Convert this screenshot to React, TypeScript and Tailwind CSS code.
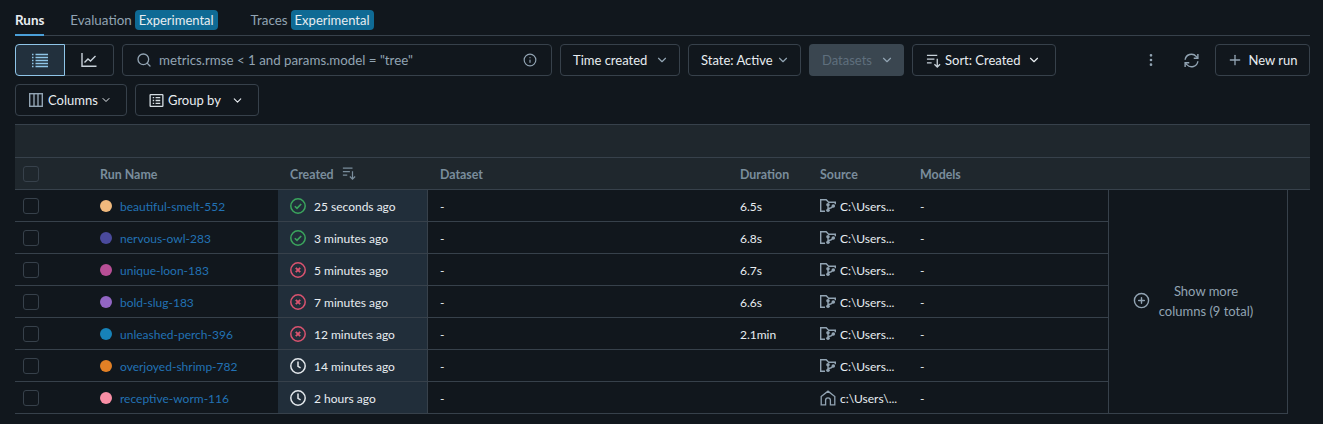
import { ChevronDown, Search, Info, MoreVertical, Plus, CirclePlus } from "lucide-react"

const font = { fontFamily: 'Lato, "Open Sans", sans-serif' }

const runs = [
  { name: "beautiful-smelt-552", color: "bg-[#f0b97d]", created: "25 seconds ago", status: "ok", duration: "6.5s", source: "C:\\Users..." },
  { name: "nervous-owl-283", color: "bg-[#4a4a9c]", created: "3 minutes ago", status: "ok", duration: "6.8s", source: "C:\\Users..." },
  { name: "unique-loon-183", color: "bg-[#b84f96]", created: "5 minutes ago", status: "fail", duration: "6.7s", source: "C:\\Users..." },
  { name: "bold-slug-183", color: "bg-[#9266c4]", created: "7 minutes ago", status: "fail", duration: "6.6s", source: "C:\\Users..." },
  { name: "unleashed-perch-396", color: "bg-[#1782b8]", created: "12 minutes ago", status: "fail", duration: "2.1min", source: "C:\\Users..." },
  { name: "overjoyed-shrimp-782", color: "bg-[#e28025]", created: "14 minutes ago", status: "clock", duration: "", source: "C:\\Users..." },
  { name: "receptive-worm-116", color: "bg-[#f98ea5]", created: "2 hours ago", status: "clock", duration: "", source: "c:\\Users\\...", home: true },
]

function SortIcon({ className }: { className?: string }) {
  return (
    <svg viewBox="0 0 16 16" fill="none" stroke="currentColor" strokeWidth="1.4" className={className}>
      <path d="M1 2.500h11M1 6.500h8M1 10.500h5" />
      <path d="M12 6v9M9 12l3 3 3-3" />
    </svg>
  )
}

function ListIcon({ className }: { className?: string }) {
  return (
    <svg viewBox="0 0 16 16" fill="none" stroke="currentColor" strokeWidth="1.3" className={className}>
      <path d="M3.500 2.500H16M3.500 5.500H16M3.500 8.500H16M3.500 11.500H16M3.500 14.500H16" />
      <path d="M0 2.500h1.500M0 5.500h1.500M0 8.500h1.500M0 11.500h1.500M0 14.500h1.500" />
    </svg>
  )
}

function ChartIcon({ className }: { className?: string }) {
  return (
    <svg viewBox="0 0 16 16" fill="none" stroke="currentColor" strokeWidth="1.4" className={className}>
      <path d="M1 1v13.300h14.500" />
      <path d="M3.500 10.500l3.500-3.500 2.500 2 5-5" />
    </svg>
  )
}

function ColumnsIcon({ className }: { className?: string }) {
  return (
    <svg viewBox="0 0 14 14" fill="none" stroke="currentColor" strokeWidth="1.4" className={className}>
      <rect x="0.700" y="0.700" width="12.600" height="12.600" />
      <path d="M5 1v12M9 1v12" />
    </svg>
  )
}

function GroupIcon({ className }: { className?: string }) {
  return (
    <svg viewBox="0 0 16 16" fill="none" stroke="currentColor" strokeWidth="1.4" className={className}>
      <rect x="1.200" y="1.700" width="13.600" height="12.600" rx="0.600" />
      <path d="M4 5h1.500M7 5h5M4 8h1.500M7 8h5M4 11h1.500M7 11h5" />
    </svg>
  )
}

function RefreshIcon({ className }: { className?: string }) {
  return (
    <svg viewBox="0 0 16 16" fill="none" stroke="currentColor" strokeWidth="1.5" className={className}>
      <path d="M1.200 7.200A6.800 6.800 0 0 1 13 3.600l1.400 1.600" />
      <path d="M14.800 1v4.600h-4.400" />
      <path d="M14.800 8.800A6.800 6.800 0 0 1 3 12.400l-1.400-1.600" />
      <path d="M1.200 15v-4.600h4.400" />
    </svg>
  )
}

function FolderBranchIcon({ className }: { className?: string }) {
  return (
    <svg viewBox="0 0 16 13" fill="none" className={className}>
      <path d="M5 12.300H.7V.7h5.500l2.400 2.500h6.700v2" stroke="currentColor" strokeWidth="1.400" />
      <path d="M8 5.500v6.500M8 9.500c2.200 0 4-.6 5-2.500" stroke="currentColor" strokeWidth="1.300" />
      <circle cx="8" cy="5.800" r="1.800" fill="currentColor" />
      <circle cx="8" cy="11.200" r="1.800" fill="currentColor" />
      <circle cx="13.300" cy="7" r="1.800" fill="currentColor" />
    </svg>
  )
}

function HomeIcon({ className }: { className?: string }) {
  return (
    <svg viewBox="0 0 16 16" fill="none" stroke="currentColor" strokeWidth="1.300" className={className}>
      <path d="M1.200 6.600L8 1.200l6.800 5.400v8.200h-4.400v-4.600a2.400 2.400 0 0 0-4.800 0v4.600H1.200z" />
    </svg>
  )
}

function StatusIcon({ status }: { status: string }) {
  if (status === "ok") {
    return (
      <svg viewBox="0 0 16 16" fill="none" stroke="#3ba55d" strokeWidth="1.500" className="h-4 w-4 shrink-0">
        <circle cx="8" cy="8" r="7.200" />
        <path d="M4.800 8.200l2.200 2.200 4.200-4.400" strokeWidth="1.600" />
      </svg>
    )
  }
  if (status === "fail") {
    return (
      <svg viewBox="0 0 16 16" fill="none" stroke="#d9536f" strokeWidth="1.500" className="h-4 w-4 shrink-0">
        <circle cx="8" cy="8" r="7.200" />
        <path d="M5.800 5.800l4.400 4.400M10.200 5.800l-4.400 4.400" strokeWidth="1.900" />
      </svg>
    )
  }
  return (
    <svg viewBox="0 0 16 16" fill="none" stroke="#e3e8ec" strokeWidth="1.500" className="h-4 w-4 shrink-0">
      <circle cx="8" cy="8" r="7.200" />
      <path d="M8 3.600V8.400l2.600 1.400" />
    </svg>
  )
}

function Button({ children, className }: { children: React.ReactNode; className?: string }) {
  return (
    <div className={`flex h-8 shrink-0 items-center whitespace-nowrap rounded border border-[#37414b] text-[#e8edf1] ${className ?? ""}`}>
      {children}
    </div>
  )
}

function Badge() {
  return <span className="rounded bg-[#0f6a94] px-1 py-px text-[13px] leading-[18px] text-[#e8edf1]">Experimental</span>
}

export default function App() {
  return (
    <div className="h-[424px] w-[1323px] overflow-hidden bg-[#11171d] pl-[15px] pr-[13px] text-[13px]" style={font}>
      <div className="flex h-9 items-center gap-[26px] border-b border-[#37414b] pt-[5px] text-[13.4px]">
        <div className="relative flex items-center self-stretch font-bold text-[#e8edf1]">
          Runs
          <span className="absolute inset-x-0 bottom-[-1px] h-[2px] bg-[#4a9fd8]" />
        </div>
        <div className="flex items-center gap-[3px] text-[#92a4b3]">
          Evaluation <Badge />
        </div>
        <div className="ml-[7px] flex items-center gap-[3px] text-[#92a4b3]">
          Traces <Badge />
        </div>
      </div>

      <div className="mt-2 flex gap-2">
        <div className="flex h-8 w-[99px]">
          <div className="flex w-[50px] items-center justify-center rounded-l border border-[#8fc5e8] bg-[#22303d] text-[#8fc5e8]">
            <ListIcon className="h-4 w-4" />
          </div>
          <div className="flex flex-1 items-center justify-center rounded-r border border-l-0 border-[#37414b] text-[#c8d2da]">
            <ChartIcon className="h-4 w-4" />
          </div>
        </div>
        <div className="flex h-8 w-[430px] items-center rounded border border-[#37414b] pl-[13px] pr-[14px] text-[#92a4b3]">
          <Search size={16} className="mr-[7px] text-[#92a4b3]" />
          <span className="flex-1 whitespace-pre pt-[2px] text-[13.3px]">metrics.rmse {"<"} 1 and params.model = "tree"</span>
          <Info size={14} />
        </div>
        <Button className="w-[120px] justify-between pl-[12px] pr-[10px]">
          <span className="pt-[2px]">Time created</span>
          <ChevronDown size={14} className="text-[#92a4b3]" />
        </Button>
        <Button className="w-[113px] justify-between pl-[12px] pr-[10px]">
          <span className="pt-[2px]">State: Active</span>
          <ChevronDown size={14} className="text-[#92a4b3]" />
        </Button>
        <div className="flex h-8 w-[95px] items-center justify-between rounded bg-[#3a4650] pl-[13px] pr-[10px] text-[#5f6f7d]">
          <span className="pt-[2px]">Datasets</span>
          <ChevronDown size={14} className="text-[#92a4b3]" />
        </div>
        <Button className="w-[144px] pl-[13px] pr-[14px]">
          <SortIcon className="mr-1 h-[15px] w-[15px] text-[#c8d2da]" />
          <span className="pt-[2px]">Sort: Created</span>
          <ChevronDown size={14} className="ml-auto text-[#e8edf1]" />
        </Button>
        <div className="ml-auto flex items-center gap-[25px]">
          <MoreVertical size={16} className="text-[#92a4b3]" />
          <RefreshIcon className="h-[15px] w-[15px] text-[#92a4b3]" />
        </div>
        <Button className="ml-[8px] w-[95px] justify-center gap-[5px]">
          <Plus size={16} className="text-[#92a4b3]" />
          <span className="pt-[2px]">New run</span>
        </Button>
      </div>

      <div className="mt-2 flex gap-2">
        <Button className="w-[112px] pl-[13px] pr-[13px]">
          <ColumnsIcon className="mr-[5px] h-[14px] w-[14px] text-[#92a4b3]" />
          <span className="pt-[2px]">Columns</span>
          <ChevronDown size={12} className="ml-[2px]" />
        </Button>
        <Button className="w-[124px] pl-[13px] pr-[14px]">
          <GroupIcon className="mr-[4px] h-[15px] w-[15px] text-[#d5dde3]" />
          <span className="pt-[2px]">Group by</span>
          <ChevronDown size={13} className="ml-auto" />
        </Button>
      </div>

      <div className="mt-2 h-[34px] border-y border-[#37414b] bg-[#1f272d]" />
      <div className="flex h-[32px] items-center border-b border-[#37414b] bg-[#1f272d] text-[12.4px] font-bold text-[#7a8d9c]">
        <div className="flex w-[85px] pl-2">
          <span className="h-4 w-4 rounded-[3px] border border-[#37414b]" />
        </div>
        <div className="w-[190px] pt-[3px]">Run Name</div>
        <div className="flex w-[150px] items-center gap-2">
          <span className="pt-[3px]">Created</span>
          <SortIcon className="h-[14px] w-[14px]" />
        </div>
        <div className="w-[300px] pt-[3px]">Dataset</div>
        <div className="w-[80px] pt-[3px]">Duration</div>
        <div className="w-[100px] pt-[3px]">Source</div>
        <div className="pt-[3px]">Models</div>
      </div>

      <div className="flex">
        <div className="w-[1093px]">
          {runs.map((run) => (
            <div key={run.name} className="flex h-[32px] items-stretch border-b border-[#37414b] text-[12px] text-[#e8edf1]">
              <div className="flex w-[85px] items-center pl-2">
                <span className="h-4 w-4 rounded-[3px] border border-[#37414b]" />
              </div>
              <div className="flex w-[178px] items-center gap-[8px]">
                <span className={`h-3 w-3 rounded-full ${run.color}`} />
                <span className="pt-[2px] text-[#2272b4]">{run.name}</span>
              </div>
              <div className="flex w-[150px] items-center gap-2 border-r border-[#37414b] bg-[#212e3a] pl-3">
                <StatusIcon status={run.status} />
                <span className="pt-[2px]">{run.created}</span>
              </div>
              <div className="flex w-[312px] items-center pl-3 pt-[2px]">-</div>
              <div className="flex w-[80px] items-center pt-[2px]">{run.duration}</div>
              <div className="flex w-[100px] items-center gap-1">
                {run.home ? (
                  <HomeIcon className="h-4 w-4 text-[#92a4b3]" />
                ) : (
                  <FolderBranchIcon className="h-[13px] w-4 text-[#92a4b3]" />
                )}
                <span className="pt-[2px]">{run.source}</span>
              </div>
              <div className="flex items-center pt-[2px]">-</div>
            </div>
          ))}
        </div>
        <div className="flex w-[180px] items-start justify-center gap-[9px] border-x border-b border-[#37414b] pt-[91px] pr-[10px] text-[#92a4b3]">
          <CirclePlus size={17} className="mt-[11px] shrink-0" />
          <div className="text-center leading-5">
            Show more
            <br />
            columns (9 total)
          </div>
        </div>
      </div>
    </div>
  )
}
